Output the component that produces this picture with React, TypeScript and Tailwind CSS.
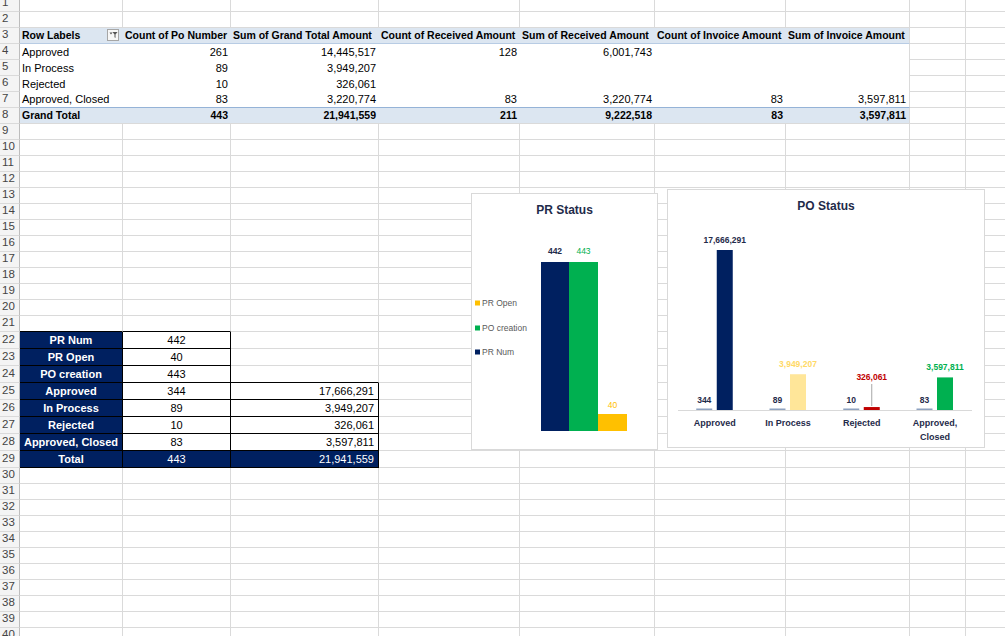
import type { ReactNode } from 'react';

// Column widths of the visible sheet (A..I)
const COLS = [
  'w-[103px]',
  'w-[108px]',
  'w-[148px]',
  'w-[141px]',
  'w-[135px]',
  'w-[131px]',
  'w-[124px]',
  'w-[56px]',
  'w-[60px]',
];

const GRID = 'border-r border-b border-[#dadada]';
const HEAD = 'bg-[#dce6f1] border-b border-[#b8cce4] font-bold text-[10.5px] pl-[2px]';
const HEAD_LAST = 'bg-[#dce6f1] border-b border-b-[#b8cce4] border-r border-r-[#dadada] font-bold text-[10.5px] pl-[2px]';
const NUM = 'justify-end pr-[3px] text-[11px]';
const TOTAL = 'bg-[#dce6f1] font-bold text-[10.5px] border-b border-[#dadada]';
const NAVY = 'bg-[#002060] text-white border-r border-b border-black';
const BOX = 'bg-white border-r border-b border-black text-[11px]';

function Cell({ c, className = GRID, children }: { c: number; className?: string; children?: ReactNode }) {
  return (
    <div className={`${COLS[c]} shrink-0 flex items-center overflow-hidden whitespace-nowrap leading-[14px] ${className}`}>
      {children}
    </div>
  );
}

function Row({ n, tall, children }: { n: number; tall?: boolean; children?: ReactNode }) {
  return (
    <div className={`flex ${tall ? 'h-[17px]' : 'h-[16px]'}`}>
      <div className="w-[20px] shrink-0 flex items-center pl-[2px] bg-[#f4f4f4] border-r border-b border-r-[#bdbdbd] border-b-[#dadada] text-[11.5px] text-[#444]">
        {n}
      </div>
      {children}
    </div>
  );
}

function Blank({ from = 0 }: { from?: number }) {
  return (
    <>
      {COLS.slice(from).map((_, i) => (
        <Cell key={i} c={from + i} />
      ))}
    </>
  );
}

function FilterButton() {
  return (
    <div className="ml-auto mr-[4px] w-[12px] h-[12px] shrink-0 border border-[#a6a6a6] bg-[#f7f7f7] flex items-center justify-center">
      <svg width="9" height="8" viewBox="0 0 9 8">
        <path d="M0.5 1.5h3l-1.5 2z" fill="#555" />
        <path d="M3.5 1h5l-2 2.5v3.5l-1-0.8v-2.7z" fill="#555" />
      </svg>
    </div>
  );
}

type PivotRow = [string, string, string, string, string, string, string];

const pivotRows: PivotRow[] = [
  ['Approved', '261', '14,445,517', '128', '6,001,743', '', ''],
  ['In Process', '89', '3,949,207', '', '', '', ''],
  ['Rejected', '10', '326,061', '', '', '', ''],
  ['Approved, Closed', '83', '3,220,774', '83', '3,220,774', '83', '3,597,811'],
];

const statusRows = [
  { label: 'PR Num', count: '442' },
  { label: 'PR Open', count: '40' },
  { label: 'PO creation', count: '443' },
  { label: 'Approved', count: '344', amount: '17,666,291' },
  { label: 'In Process', count: '89', amount: '3,949,207' },
  { label: 'Rejected', count: '10', amount: '326,061' },
  { label: 'Approved, Closed', count: '83', amount: '3,597,811' },
];

function PRChart() {
  return (
    <div className="absolute left-[471px] top-[193px] w-[187px] h-[257px] border border-[#d9d9d9] bg-white">
      <div className="pt-[8px] text-center text-[12px] leading-[16px] font-bold text-[#1f2b4a]">PR Status</div>
      <svg className="absolute left-0 top-0" width="185" height="255" viewBox="0 0 185 255">
        <rect x="69" y="68" width="28" height="169" fill="#002060" />
        <rect x="97" y="68" width="29" height="169" fill="#00b050" />
        <rect x="126" y="220" width="29" height="17" fill="#ffc000" />
        <text x="83" y="60" textAnchor="middle" fontSize="8.5" fontWeight="bold" fill="#1f2b4a">442</text>
        <text x="111.5" y="60" textAnchor="middle" fontSize="8.5" fill="#00b050">443</text>
        <text x="140.5" y="214" textAnchor="middle" fontSize="8.5" fill="#ffc000">40</text>
        <rect x="3" y="106.5" width="5" height="5" fill="#ffc000" />
        <text x="10" y="112" fontSize="8.5" fill="#595959">PR Open</text>
        <rect x="3" y="131.5" width="5" height="5" fill="#00b050" />
        <text x="10" y="137" fontSize="8.5" fill="#595959">PO creation</text>
        <rect x="3" y="155.5" width="5" height="5" fill="#002060" />
        <text x="10" y="161" fontSize="8.5" fill="#595959">PR Num</text>
      </svg>
    </div>
  );
}

const poGroups = [
  { c: 46.75, count: '344', amount: '17,666,291', value: 17666291, color: '#002060', label: '#1f2b4a', lines: ['Approved'] },
  { c: 120, count: '89', amount: '3,949,207', value: 3949207, color: '#ffe699', label: '#ffd966', lines: ['In Process'] },
  { c: 193.75, count: '10', amount: '326,061', value: 326061, color: '#c00000', label: '#c00000', lines: ['Rejected'] },
  { c: 267, count: '83', amount: '3,597,811', value: 3597811, color: '#00b050', label: '#00b050', lines: ['Approved,', 'Closed'] },
];

function POChart() {
  const base = 220;
  const scale = 160 / 17666291;
  return (
    <div className="absolute left-[667px] top-[189px] w-[318px] h-[259px] border border-[#d9d9d9] bg-white">
      <div className="pt-[8px] text-center text-[12px] leading-[16px] font-bold text-[#1f2b4a]">PO Status</div>
      <svg className="absolute left-0 top-0" width="316" height="257" viewBox="0 0 316 257">
        <line x1="10" y1={base + 0.5} x2="304" y2={base + 0.5} stroke="#d9d9d9" />
        {poGroups.map((g) => {
          const h = g.value * scale;
          const top = base - h;
          const rejected = g.count === '10';
          return (
            <g key={g.count}>
              <rect x={g.c - 18.5} y={base - 1.5} width="16" height="1.5" fill="#8ea2c0" />
              <rect x={g.c + 2} y={top} width="16" height={h} fill={g.color} />
              <text x={g.c - 10.5} y="213" textAnchor="middle" fontSize="8.5" fontWeight="bold" fill="#1f2b4a">
                {g.count}
              </text>
              {rejected ? (
                <>
                  <line x1={g.c + 10} y1="194" x2={g.c + 10} y2={top - 1} stroke="#a6a6a6" />
                  <text x={g.c + 10} y="190" textAnchor="middle" fontSize="8.5" fontWeight="bold" fill={g.label}>
                    {g.amount}
                  </text>
                </>
              ) : (
                <text x={g.c + 10} y={top - 7} textAnchor="middle" fontSize="8.5" fontWeight="bold" fill={g.label}>
                  {g.amount}
                </text>
              )}
              {g.lines.map((l, i) => (
                <text key={l} x={g.c} y={236 + i * 14} textAnchor="middle" fontSize="9" fontWeight="bold" fill="#1f2b4a">
                  {l}
                </text>
              ))}
            </g>
          );
        })}
      </svg>
    </div>
  );
}

export default function App() {
  return (
    <div className="relative w-[1005px] h-[636px] overflow-hidden bg-white text-black font-['Liberation_Sans',Arial,sans-serif]">
      <div className="-mt-[4.5px]">
        <Row n={1}><Blank /></Row>
        <Row n={2}><Blank /></Row>

        {/* pivot table */}
        <Row n={3}>
          <Cell c={0} className={HEAD}>
            Row Labels
            <FilterButton />
          </Cell>
          <Cell c={1} className={HEAD}>Count of Po Number</Cell>
          <Cell c={2} className={HEAD}>Sum of Grand Total Amount</Cell>
          <Cell c={3} className={HEAD}>Count of Received Amount</Cell>
          <Cell c={4} className={HEAD}>Sum of Received Amount</Cell>
          <Cell c={5} className={HEAD}>Count of Invoice Amount</Cell>
          <Cell c={6} className={HEAD_LAST}>Sum of Invoice Amount</Cell>
          <Blank from={7} />
        </Row>
        {pivotRows.map((r, i) => {
          const last = i === pivotRows.length - 1;
          const edge = last ? 'border-b border-[#95b3d7]' : '';
          return (
            <Row key={r[0]} n={4 + i}>
              <Cell c={0} className={`bg-white pl-[2px] text-[11px] ${edge}`}>{r[0]}</Cell>
              {r.slice(1).map((v, j) => (
                <Cell
                  key={j}
                  c={j + 1}
                  className={`bg-white ${NUM} ${edge} ${j === 5 ? 'border-r border-r-[#dadada]' : ''}`}
                >
                  {v}
                </Cell>
              ))}
              <Blank from={7} />
            </Row>
          );
        })}
        <Row n={8}>
          <Cell c={0} className={`${TOTAL} pl-[2px]`}>Grand Total</Cell>
          {['443', '21,941,559', '211', '9,222,518', '83', '3,597,811'].map((v, j) => (
            <Cell key={j} c={j + 1} className={`${TOTAL} justify-end pr-[3px] ${j === 5 ? 'border-r' : ''}`}>
              {v}
            </Cell>
          ))}
          <Blank from={7} />
        </Row>

        {[9, 10, 11, 12, 13, 14, 15, 16, 17, 18, 19, 20].map((n) => (
          <Row key={n} n={n}><Blank /></Row>
        ))}
        <Row n={21}>
          <Cell c={0} className="border-r border-b border-r-[#dadada] border-b-black" />
          <Cell c={1} className="border-r border-b border-r-[#dadada] border-b-black" />
          <Blank from={2} />
        </Row>

        {/* status summary table */}
        {statusRows.map((s, i) => (
          <Row key={s.label} n={22 + i} tall>
            <Cell c={0} className={`${NAVY} justify-center font-bold text-[11px]`}>{s.label}</Cell>
            <Cell c={1} className={`${BOX} justify-center`}>{s.count}</Cell>
            {s.amount ? (
              <Cell c={2} className={`${BOX} justify-end pr-[4px]`}>{s.amount}</Cell>
            ) : (
              <Cell c={2} className={i === 2 ? 'border-r border-b border-r-[#dadada] border-b-black' : GRID} />
            )}
            <Blank from={3} />
          </Row>
        ))}
        <Row n={29} tall>
          <Cell c={0} className={`${NAVY} justify-center font-bold text-[11px]`}>Total</Cell>
          <Cell c={1} className={`${NAVY} justify-center text-[11px]`}>443</Cell>
          <Cell c={2} className={`${NAVY} justify-end pr-[4px] text-[11px]`}>21,941,559</Cell>
          <Blank from={3} />
        </Row>

        {[30, 31, 32, 33, 34, 35, 36, 37, 38, 39, 40].map((n) => (
          <Row key={n} n={n}><Blank /></Row>
        ))}
      </div>

      <PRChart />
      <POChart />
    </div>
  );
}
